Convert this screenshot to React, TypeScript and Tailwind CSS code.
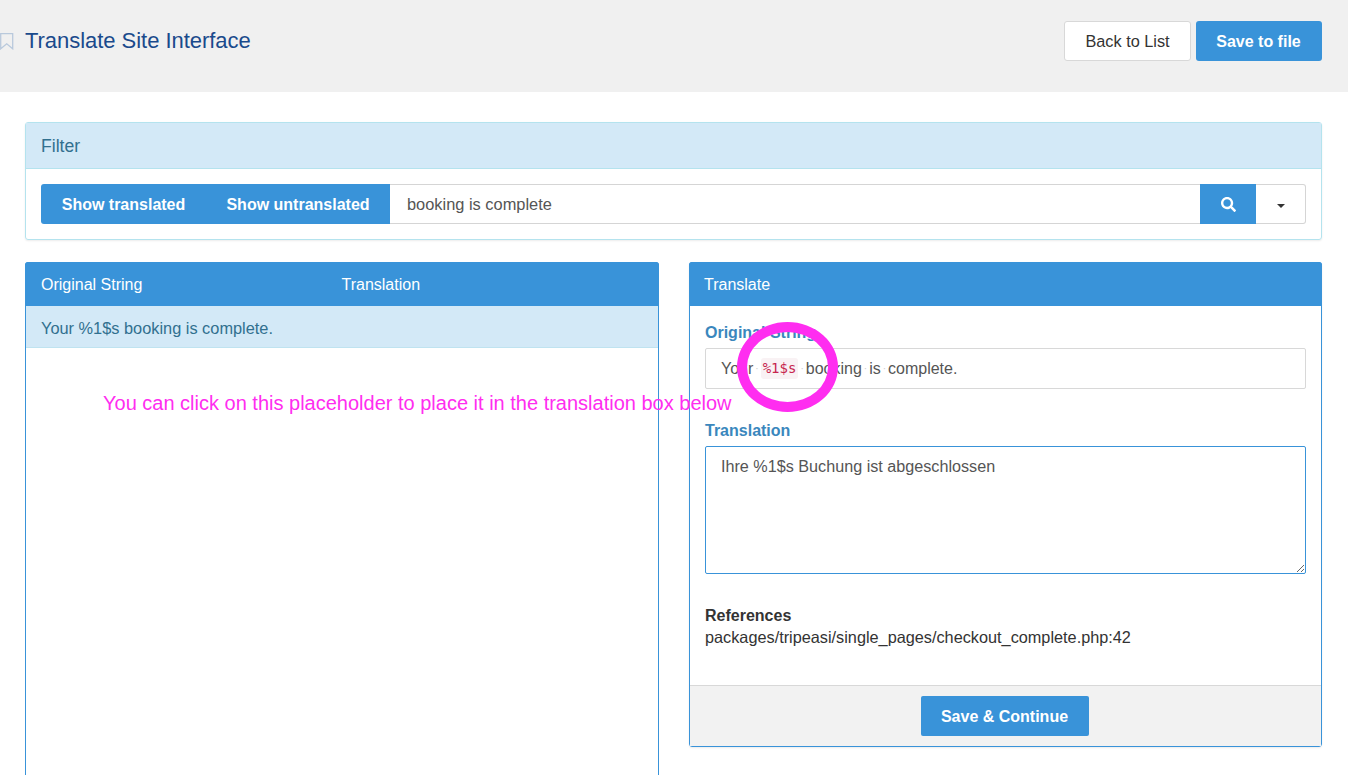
// App.tsx
import { FaSearch } from 'react-icons/fa';

const font = { sans: 'font-["Liberation_Sans",Arial,sans-serif]' };

const Sep = () => <span className="mx-[2px] align-middle text-[10px] text-[#ccc]">·</span>;

export default function App() {
  return (
    <div className={`relative h-[775px] overflow-hidden bg-white text-[16px] text-[#333] ${font.sans}`}>
      {/* header */}
      <div className="flex h-[92px] items-start justify-between bg-[#f0f0f0] pr-[26px] pt-[21px]">
        <div className="flex items-center">
          <svg width="14" height="17" viewBox="0 0 14 17" fill="none" stroke="#b9c9dc" strokeWidth="1.3" className="mt-[1px]">
            <path d="M0.7 0.7H12.7V15.8L6.7 10.8L0.7 15.8Z" />
          </svg>
          <h1 className="ml-[11px] text-[22px] leading-[40px] tracking-[-0.04px] text-[#1a4a8c]">Translate Site Interface</h1>
        </div>
        <div className="flex gap-[5px]">
          <button className="h-[40px] w-[127px] rounded-[3px] border border-[#d8d8d8] bg-white text-[16.3px] text-[#333]">Back to List</button>
          <button className="h-[40px] w-[126px] rounded-[3px] bg-[#3993d9] pr-[1px] pt-[2px] text-[16px] font-bold text-white">Save to file</button>
        </div>
      </div>

      <div className="pl-[25px] pr-[26px] pt-[30px]">
        {/* filter */}
        <div className="rounded-[3px] border border-[#b4e3ee] shadow-[0_1px_2px_rgba(0,0,0,0.08)]">
          <div className="flex h-[46px] items-center border-b border-[#b4e3ee] bg-[#d3e9f7] px-[15px] pt-[2px] text-[17.6px] text-[#31708f]">Filter</div>
          <div className="p-[15px]">
            <div className="flex h-[40px]">
              <button className="w-[165px] rounded-l-[3px] bg-[#3993d9] pt-[2px] font-bold text-white">Show translated</button>
              <button className="w-[184px] bg-[#3993d9] pt-[2px] font-bold text-white">Show untranslated</button>
              <div className="flex flex-1 items-center border-y border-[#d5d5d5] pl-[17px] text-[16.4px] text-[#555]">booking is complete</div>
              <button className="flex w-[56px] items-center justify-center bg-[#3993d9] text-white">
                <FaSearch className="h-[15px] w-[15px]" />
              </button>
              <button className="flex w-[50px] items-center justify-center rounded-r-[3px] border border-l-0 border-[#d5d5d5] bg-white">
                <span className="mt-[4px] h-0 w-0 border-x-[4px] border-t-[4px] border-x-transparent border-t-[#333]" />
              </button>
            </div>
          </div>
        </div>

        <div className="mt-[22px] flex items-start gap-[30px]">
          {/* list */}
          <div className="h-[600px] w-[634px] rounded-t-[3px] border border-[#3993d9]">
            <div className="-mx-px -mt-px flex h-[44px] items-center rounded-t-[3px] bg-[#3993d9] px-[16px] pt-[2px] text-white">
              <span className="w-[300.5px]">Original String</span>
              <span>Translation</span>
            </div>
            <div className="flex h-[42px] items-center border-b border-[#bfe3f0] bg-[#d3e9f7] px-[15px] pt-[4px] text-[16.35px] text-[#31708f]">Your %1$s booking is complete.</div>
          </div>

          {/* translate */}
          <div className="h-[485px] w-[633px] rounded-[3px] border border-[#3993d9] shadow-[0_1px_2px_rgba(0,0,0,0.08)]">
            <div className="-mx-px -mt-px flex h-[44px] items-center rounded-t-[3px] bg-[#3993d9] px-[15px] pt-[2px] text-white">Translate</div>
            <div className="h-[379px] px-[15px] pt-[16px]">
              <label className="block text-[16px] font-bold leading-[22px] text-[#3a87bd]">Original String</label>
              <div className="mt-[4px] flex h-[41px] items-center rounded-[2px] border border-[#d8d8d8] pl-[15px] text-[#555]">
                Your<Sep /><code className="rounded-[3px] bg-[#f9f2f4] px-[2px] font-['DejaVu_Sans_Mono',monospace] text-[14px] text-[#c7254e]">%1$s</code><Sep />booking<Sep />is<Sep />complete.
              </div>
              <label className="mt-[31px] block font-bold leading-[22px] text-[#3a87bd]">Translation</label>
              <textarea
                className="mt-[4px] block h-[128px] w-full rounded-[2px] border border-[#3993d9] px-[15px] py-[7px] text-[16.18px] text-[#555] outline-none"
                defaultValue="Ihre %1$s Buchung ist abgeschlossen"
              />
              <div className="mt-[31px] font-bold leading-[22px] text-[#333]">References</div>
              <div className="text-[16.27px] leading-[20px] text-[#333]">packages/tripeasi/single_pages/checkout_complete.php:42</div>
            </div>
            <div className="flex h-[61px] items-center justify-center border-t border-[#d8d8d8] bg-[#f2f2f2]">
              <button className="mr-[2px] h-[40px] w-[168px] rounded-[2px] bg-[#3993d9] pt-[2px] font-bold text-white">Save &amp; Continue</button>
            </div>
          </div>
        </div>
      </div>

      {/* annotation over the page */}
      <div className="absolute left-[737px] top-[322px] h-[90px] w-[101px] rounded-[50%] border-[10px] border-[#ff2df0]" />
      <div className="absolute left-[103px] top-[392px] text-[20px] leading-[22px] text-[#ff2df0]">You can click on this placeholder to place it in the translation box below</div>
    </div>
  );
}
